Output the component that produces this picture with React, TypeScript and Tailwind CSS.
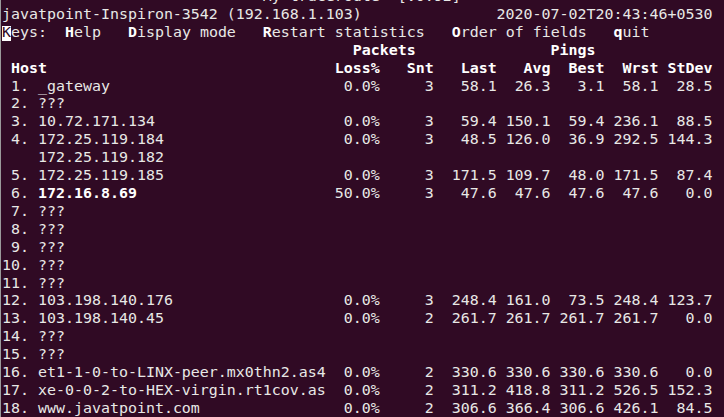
import React from "react";

type Seg = { t: string; b?: boolean };

const hops: (string | number)[][] = [
  [1, "_gateway", "0.0%", 3, "58.1", "26.3", "3.1", "58.1", "28.5"],
  [2, "???"],
  [3, "10.72.171.134", "0.0%", 3, "59.4", "150.1", "59.4", "236.1", "88.5"],
  [4, "172.25.119.184", "0.0%", 3, "48.5", "126.0", "36.9", "292.5", "144.3"],
  [0, "172.25.119.182"],
  [5, "172.25.119.185", "0.0%", 3, "171.5", "109.7", "48.0", "171.5", "87.4"],
  [6, "172.16.8.69", "50.0%", 3, "47.6", "47.6", "47.6", "47.6", "0.0"],
  [7, "???"],
  [8, "???"],
  [9, "???"],
  [10, "???"],
  [11, "???"],
  [12, "103.198.140.176", "0.0%", 3, "248.4", "161.0", "73.5", "248.4", "123.7"],
  [13, "103.198.140.45", "0.0%", 2, "261.7", "261.7", "261.7", "261.7", "0.0"],
  [14, "???"],
  [15, "???"],
  [16, "et1-1-0-to-LINX-peer.mx0thn2.as4", "0.0%", 2, "330.6", "330.6", "330.6", "330.6", "0.0"],
  [17, "xe-0-0-2-to-HEX-virgin.rt1cov.as", "0.0%", 2, "311.2", "418.8", "311.2", "526.5", "152.3"],
  [18, "www.javatpoint.com", "0.0%", 2, "306.6", "366.4", "306.6", "426.1", "84.5"],
];

const widths = [6, 6, 7, 6, 6, 6, 6];

function stats(vals: (string | number)[]) {
  return vals.map((v, i) => String(v).padStart(widths[i])).join("");
}

function hopLine(h: (string | number)[]): Seg[] {
  const [n, host, ...vals] = h;
  const num = n ? String(n).padStart(2) + ". " : "    ";
  const bold = host === "172.16.8.69";
  const rest = vals.length ? " ".repeat(32 - String(host).length) + stats(vals) : "";
  return [{ t: num }, { t: String(host), b: bold }, { t: rest }];
}

const header = " Host".padEnd(36) + stats(["Loss%", "Snt", "Last", "Avg", "Best", "Wrst", "StDev"]);

const lines: Seg[][] = [
  [{ t: " ".repeat(29) + "My traceroute  [v0.92]" }],
  [{ t: "javatpoint-Inspiron-3542 (192.168.1.103)".padEnd(55) + "2020-07-02T20:43:46+0530" }],
  [
    { t: "eys:  " },
    { t: "H", b: true },
    { t: "elp   " },
    { t: "D", b: true },
    { t: "isplay mode   " },
    { t: "R", b: true },
    { t: "estart statistics   " },
    { t: "O", b: true },
    { t: "rder of fields   " },
    { t: "q", b: true },
    { t: "uit" },
  ],
  [{ t: " ".repeat(39) + "Packets" + " ".repeat(15) + "Pings", b: true }],
  [{ t: header, b: true }],
  ...hops.map(hopLine),
];

export default function App() {
  return (
    <div className="w-[724px] h-[417px] overflow-hidden bg-[#300a24] border-l border-[#9a9a9a] flex flex-col">
      <pre className="-mt-[12px] pl-[1px] font-['DejaVu_Sans_Mono',monospace] text-[14.95px] leading-[17.92px] text-[#e8e8e6]">
        {lines.map((segs, i) => (
          <div key={i} className="h-[17.92px]">
            {i === 2 && (
              <span className="relative">
                <span className="absolute left-0 right-0 top-[3px] bottom-[0px] bg-white" />
                <span className="relative text-[#300a24]">K</span>
              </span>
            )}
            {segs.map((s, j) => (
              <span key={j} className={s.b ? "font-bold text-white" : ""}>
                {s.t}
              </span>
            ))}
          </div>
        ))}
      </pre>
    </div>
  );
}
